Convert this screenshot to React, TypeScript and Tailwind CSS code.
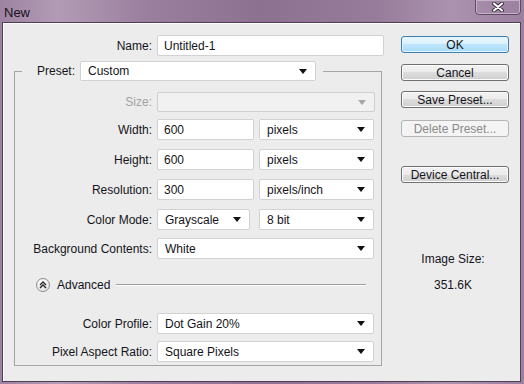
const font = { fontFamily: '"Liberation Sans", Arial, sans-serif' };

function Arrow({ disabled }: { disabled?: boolean }) {
  return (
    <svg width="8" height="5" viewBox="0 0 8 5" className="shrink-0">
      <path d="M0 0h8L4 5z" fill={disabled ? "#a6a6a6" : "#111"} />
    </svg>
  );
}

function Select({ value, w, h = "h-[21px]", disabled }: { value?: string; w: string; h?: string; disabled?: boolean }) {
  return (
    <div
      className={`${w} ${h} flex items-center justify-between pl-[7px] pr-[8px] rounded-[2px] border ${
        disabled ? "bg-[#f1f1f1] border-[#cfcfcf]" : "bg-white border-[#d2d2d2]"
      }`}
    >
      <span>{value}</span>
      <Arrow disabled={disabled} />
    </div>
  );
}

function Field({ value, w }: { value: string; w: string }) {
  return (
    <div className={`${w} h-[21px] flex items-center pl-[6px] bg-white border border-[#d2d2d2] rounded-[2px]`}>
      {value}
    </div>
  );
}

function Row({ label, mt, children, muted }: { label: string; mt: string; children: React.ReactNode; muted?: boolean }) {
  return (
    <div className={`flex items-center ${mt}`}>
      <div className={`w-[137px] text-right ${muted ? "text-[#a3a3a3]" : ""}`}>{label}</div>
      <div className="ml-[5px] flex items-center">{children}</div>
    </div>
  );
}

function Button({ label, primary, disabled, mt }: { label: string; primary?: boolean; disabled?: boolean; mt: string }) {
  const look = primary
    ? "border-[#3c7fb1] bg-[linear-gradient(#eaf6fd,#d9f0fc_50%,#bee6fd_50%,#a7d9f5)] shadow-[inset_0_0_0_1px_#e3f4fc]"
    : disabled
    ? "border-[#b5b5b5] bg-[#f4f4f4] text-[#8a8a8a]"
    : "border-[#707070] bg-[linear-gradient(#f2f2f2,#ebebeb_50%,#dddddd_50%,#cfcfcf)] shadow-[inset_0_0_0_1px_#fcfcfc]";
  return (
    <div className={`${mt} w-[108px] h-[17px] flex items-center justify-center border rounded-[3px] ${look}`}>
      {label}
    </div>
  );
}

export default function App() {
  return (
    <div
      style={font}
      className="w-[524px] h-[384px] flex flex-col text-[12px] text-[#141420] bg-[linear-gradient(90deg,#9d83a1_0%,#b29cb5_11%,#9a7f9e_28%,#8d7190_50%,#987c9b_72%,#ab93af_86%,#9b809f_100%)]"
    >
      <div className="h-[22px] flex justify-between items-start">
        <div className="pl-[4px] pt-[3px] text-[13px] text-[#1a1020]">New</div>
        <div className="mr-[3px] w-[46px] h-[16px] -mt-px rounded-b-[4px] border border-[#5f4a63] shadow-[inset_0_0_0_1px_#c4b3c7] flex items-center justify-center">
          <svg width="14" height="10" viewBox="0 0 14 10">
            <path d="M3 1.5l8 7M11 1.5l-8 7" stroke="#3e2f42" strokeWidth="4" strokeLinecap="round" />
            <path d="M3 1.5l8 7M11 1.5l-8 7" stroke="#fff" strokeWidth="2" strokeLinecap="round" />
          </svg>
        </div>
      </div>

      <div className="ml-[2px] mr-[3px] mb-[2px] flex-1 flex border border-[#4e3f52] bg-[#ececec] shadow-[inset_1px_1px_0_#fff]">
        <div className="w-[382px] pt-[12px]">
          <div className="flex items-center">
            <div className="w-[149px] text-right">Name:</div>
            <div className="ml-[5px]">
              <Field value="Untitled-1" w="w-[227px]" />
            </div>
          </div>

          <fieldset className="ml-[11px] mt-[5px] w-[368px] h-[305px] border border-[#a5a5a5]">
            <legend className="ml-[7px]">
              <div className="flex items-center pl-[15px] pr-[7px] bg-[#ececec]">
                <span>Preset:</span>
                <div className="ml-[5px]">
                  <Select value="Custom" w="w-[236px]" h="h-[20px]" />
                </div>
              </div>
            </legend>

            <Row label="Size:" mt="mt-[11px]" muted>
              <Select w="w-[218px]" h="h-[20px]" disabled />
            </Row>
            <Row label="Width:" mt="mt-[7px]">
              <Field value="600" w="w-[97px]" />
              <div className="ml-[5px]">
                <Select value="pixels" w="w-[115px]" />
              </div>
            </Row>
            <Row label="Height:" mt="mt-[9px]">
              <Field value="600" w="w-[97px]" />
              <div className="ml-[5px]">
                <Select value="pixels" w="w-[115px]" />
              </div>
            </Row>
            <Row label="Resolution:" mt="mt-[9px]">
              <Field value="300" w="w-[97px]" />
              <div className="ml-[5px]">
                <Select value="pixels/inch" w="w-[115px]" />
              </div>
            </Row>
            <Row label="Color Mode:" mt="mt-[9px]">
              <Select value="Grayscale" w="w-[93px]" />
              <div className="ml-[9px]">
                <Select value="8 bit" w="w-[115px]" />
              </div>
            </Row>
            <Row label="Background Contents:" mt="mt-[8px]">
              <Select value="White" w="w-[217px]" />
            </Row>

            <div className="mt-[17px] flex items-center pl-[21px] pr-[15px]">
              <div className="w-[14px] h-[14px] rounded-full border border-[#8d8d8d] bg-[radial-gradient(circle_at_40%_30%,#ffffff,#dcdcdc)] flex items-center justify-center">
                <svg width="8" height="8" viewBox="0 0 8 8">
                  <path d="M1 4l3-3 3 3M1 7l3-3 3 3" fill="none" stroke="#222" strokeWidth="1.3" />
                </svg>
              </div>
              <span className="ml-[7px]">Advanced</span>
              <div className="ml-[6px] flex-1 border-t border-b border-t-[#a0a0a0] border-b-white" />
            </div>

            <Row label="Color Profile:" mt="mt-[19px]">
              <Select value="Dot Gain 20%" w="w-[217px]" />
            </Row>
            <Row label="Pixel Aspect Ratio:" mt="mt-[7px]">
              <Select value="Square Pixels" w="w-[217px]" />
            </Row>
          </fieldset>
        </div>

        <div className="ml-[16px] w-[108px] flex flex-col pt-[13px]">
          <Button label="OK" primary mt="mt-0" />
          <Button label="Cancel" mt="mt-[11px]" />
          <Button label="Save Preset..." mt="mt-[10px]" />
          <Button label="Delete Preset..." disabled mt="mt-[12px]" />
          <Button label="Device Central..." mt="mt-[29px]" />
          <div className="mt-[67px] text-center pr-[4px]">Image Size:</div>
          <div className="mt-[8px] text-center pr-[4px]">351.6K</div>
        </div>
      </div>
    </div>
  );
}
